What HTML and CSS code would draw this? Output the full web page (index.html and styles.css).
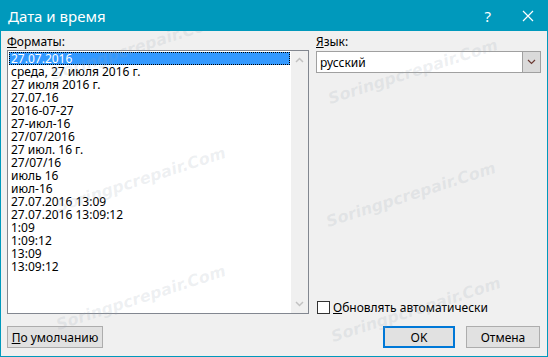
FILE: index.html
```html
<!DOCTYPE html>
<html lang="ru">
<head>
    <meta charset="UTF-8">
    <title>Дата и время</title>
    <link rel="stylesheet" href="styles.css">
</head>
<body>

<div class="window">
    <div class="titlebar">
        <span class="title">Дата и время</span>
        <span class="help">?</span>
        <svg class="close" width="12" height="12" viewBox="0 0 12 12">
            <path d="M1 1 L11 11 M11 1 L1 11" stroke="#fff" stroke-width="1.2" fill="none"/>
        </svg>
    </div>

    <div class="content">
        <!-- Formats column -->
        <div class="col-left">
            <div class="label"><u>Ф</u>орматы:</div>
            <div class="listbox">
                <div class="items">
                    <div class="item selected">27.07.2016</div>
                    <div class="item">среда, 27 июля 2016 г.</div>
                    <div class="item">27 июля 2016 г.</div>
                    <div class="item">27.07.16</div>
                    <div class="item">2016-07-27</div>
                    <div class="item">27-июл-16</div>
                    <div class="item">27/07/2016</div>
                    <div class="item">27 июл. 16 г.</div>
                    <div class="item">27/07/16</div>
                    <div class="item">июль 16</div>
                    <div class="item">июл-16</div>
                    <div class="item">27.07.2016 13:09</div>
                    <div class="item">27.07.2016 13:09:12</div>
                    <div class="item">1:09</div>
                    <div class="item">1:09:12</div>
                    <div class="item">13:09</div>
                    <div class="item">13:09:12</div>
                </div>
                <div class="scrollbar">
                    <svg width="9" height="6" viewBox="0 0 9 6"><path d="M1 5 L4.5 1.5 L8 5" stroke="#c2c2c2" stroke-width="1.5" fill="none"/></svg>
                    <svg width="9" height="6" viewBox="0 0 9 6"><path d="M1 1 L4.5 4.5 L8 1" stroke="#c2c2c2" stroke-width="1.5" fill="none"/></svg>
                </div>
            </div>
            <div class="actions">
                <button class="button wide"><u>П</u>о умолчанию</button>
            </div>
        </div>

        <!-- Language column -->
        <div class="col-right">
            <div class="label"><u>Я</u>зык:</div>
            <div class="combo">
                <span class="combo-text">русский</span>
                <span class="combo-btn">
                    <svg width="9" height="6" viewBox="0 0 9 6"><path d="M1 1 L4.5 4.5 L8 1" stroke="#6b3a33" stroke-width="1.2" fill="none"/></svg>
                </span>
            </div>
            <div class="spacer"></div>
            <label class="check">
                <span class="box"></span>
                <span><u>О</u>бновлять автоматически</span>
            </label>
            <div class="actions right">
                <button class="button default">OK</button>
                <button class="button">Отмена</button>
            </div>
        </div>
    </div>

    <!-- watermark -->
    <div class="wm wm1">Soringpcrepair.Com</div>
    <div class="wm wm2">Soringpcrepair.Com</div>
    <div class="wm wm3">Soringpcrepair.Com</div>
    <div class="wm wm4">Soringpcrepair.Com</div>
    <div class="wm wm5">Soringpcrepair.Com</div>
    <div class="wm wm6">Soringpcrepair.Com</div>
</div>

</body>
</html>
```

FILE: styles.css
```css
body {
    margin: 0;
    font-family: 'Noto Sans', 'Liberation Sans', sans-serif;
    font-size: 12px;
    color: #000;
    background: #fff;
}
.window {
    position: relative;
    width: 548px;
    height: 357px;
    box-sizing: border-box;
    border: 1px solid #0099bc;
    border-top: none;
    background: #f0f0f0;
    overflow: hidden;
    display: flex;
    flex-direction: column;
}
.titlebar {
    position: relative;
    z-index: 2;
    height: 31px;
    margin: 0 -1px;
    background: #0099bc;
    color: #fff;
    display: flex;
    align-items: center;
    flex-shrink: 0;
}
.title {
    font-size: 15px;
    margin-left: 8px;
    flex: 1;
}
.help {
    font-size: 15px;
    margin-right: 31px;
}
.close {
    margin-right: 14px;
}
.content {
    flex: 1;
    display: flex;
    gap: 7px;
    padding: 3px 6px 8px 6px;
}
.col-left {
    width: 302px;
    display: flex;
    flex-direction: column;
}
.col-right {
    flex: 1;
    display: flex;
    flex-direction: column;
}
.label {
    height: 16px;
    line-height: 16px;
}
.listbox {
    height: 264px;
    box-sizing: border-box;
    border: 1px solid #828790;
    background: #fff;
    display: flex;
}
.items {
    flex: 1;
    padding: 1px;
    overflow: hidden;
}
.item {
    height: 13px;
    line-height: 13px;
    padding-left: 2px;
    white-space: nowrap;
}
.item.selected {
    background: #3399ff;
    color: #fff;
    outline: 1px dotted #000;
    outline-offset: -1px;
}
.scrollbar {
    width: 17px;
    background: #f0f0f0;
    display: flex;
    flex-direction: column;
    justify-content: space-between;
    align-items: center;
    padding: 6px 0 6px;
}
.actions {
    margin-top: 12px;
    display: flex;
    gap: 11px;
}
.actions.right {
    justify-content: flex-end;
    margin-right: 1px;
}
.button {
    height: 22px;
    box-sizing: border-box;
    border: 1px solid #adadad;
    background: #e1e1e1;
    font-family: inherit;
    font-size: 12px;
    padding: 0;
    width: 74px;
    color: #000;
}
.button.wide {
    width: 96px;
}
.button.default {
    width: 72px;
    border: 2px solid #0078d7;
}
.combo {
    margin-top: 1px;
    height: 22px;
    box-sizing: border-box;
    border: 1px solid #a0a0a0;
    background: #fff;
    display: flex;
    align-items: center;
}
.combo-text {
    flex: 1;
    padding-left: 3px;
}
.combo-btn {
    width: 18px;
    height: 20px;
    box-sizing: border-box;
    background: #dadada;
    border-left: 1px solid #a0a0a0;
    display: flex;
    align-items: center;
    justify-content: center;
}
.spacer {
    flex: 1;
}
.check {
    display: flex;
    align-items: center;
    gap: 3px;
    height: 14px;
    margin-left: 1px;
}
.box {
    width: 13px;
    height: 13px;
    box-sizing: border-box;
    border: 1px solid #333;
    background: #fff;
}
.wm {
    position: absolute;
    z-index: 1;
    width: 190px;
    height: 20px;
    line-height: 20px;
    text-align: center;
    font-family: 'DejaVu Sans', sans-serif;
    font-style: italic;
    font-weight: bold;
    font-size: 16px;
    color: rgba(150, 160, 175, 0.16);
    transform: rotate(-18deg);
    pointer-events: none;
    white-space: nowrap;
}
.wm1 { left: 40px; top: 38px; }
.wm2 { left: 317px; top: 62px; }
.wm3 { left: 45px; top: 170px; }
.wm4 { left: 315px; top: 185px; }
.wm5 { left: 45px; top: 288px; }
.wm6 { left: 320px; top: 300px; }
```
